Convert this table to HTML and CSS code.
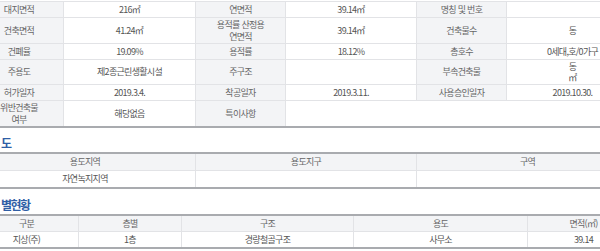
FILE: index.html
```html
<!DOCTYPE html>
<html lang="ko">
<head>
<meta charset="utf-8">
<link rel="stylesheet" href="styles.css">
</head>
<body>
<div class="page">
  <div class="grid info">
    <div class="th">대지면적</div><div class="td">216㎡</div>
    <div class="th">연면적</div><div class="td">39.14㎡</div>
    <div class="th">명칭 및 번호</div><div class="td"></div>

    <div class="th">건축면적</div><div class="td">41.24㎡</div>
    <div class="th">용적률 산정용<br>연면적</div><div class="td">39.14㎡</div>
    <div class="th">건축물수</div><div class="td">동</div>

    <div class="th">건폐율</div><div class="td">19.09%</div>
    <div class="th">용적률</div><div class="td">18.12%</div>
    <div class="th">총호수</div><div class="td">0세대,호/0가구</div>

    <div class="th">주용도</div><div class="td">제2종근린생활시설</div>
    <div class="th">주구조</div><div class="td"></div>
    <div class="th">부속건축물</div><div class="td">동<br>㎡</div>

    <div class="th">허가일자</div><div class="td">2019.3.4.</div>
    <div class="th">착공일자</div><div class="td">2019.3.11.</div>
    <div class="th">사용승인일자</div><div class="td">2019.10.30.</div>

    <div class="th">위반건축물<br>여부</div><div class="td">해당없음</div>
    <div class="th">특이사항</div><div class="td span3"></div>
  </div>

  <h2 class="title">도</h2>
  <div class="grid zone">
    <div class="th">용도지역</div><div class="th">용도지구</div><div class="th">구역</div>
    <div class="td">자연녹지지역</div><div class="td"></div><div class="td"></div>
  </div>

  <h2 class="title">별현황</h2>
  <div class="grid floor">
    <div class="th">구분</div><div class="th">층별</div><div class="th">구조</div><div class="th">용도</div><div class="th">면적(㎡)</div>
    <div class="td">지상(주)</div><div class="td">1층</div><div class="td">경량철골구조</div><div class="td">사무소</div><div class="td">39.14</div>
  </div>
</div>
</body>
</html>
```

FILE: styles.css
```css
html, body {
  margin: 0;
  padding: 0;
  background: #fff;
}

body {
  width: 600px;
  height: 251px;
  overflow: hidden;
  font-family: "Noto Sans CJK KR", "Noto Sans", sans-serif;
  font-size: 9px;
  letter-spacing: -0.7px;
  color: #555;
}

.page {
  margin-left: -25px;
  width: 664px;
}

.grid {
  display: grid;
  gap: 1px;
  background: #e2e3e6;
  border-bottom: 2px solid #a9abaf;
}

.th,
.td {
  display: flex;
  align-items: center;
  justify-content: center;
  text-align: center;
  line-height: 11.5px;
  background: #fff;
}

.th {
  background: #f3f4f6;
  color: #666;
}

.info {
  margin-top: 1px;
  border-top: 1px solid #e2e3e6;
  grid-template-columns: 88px 131px 89px 130px 89px 131px;
  grid-template-rows: 15px 25px 15px 24px 15px 25px;
}

.span3 {
  grid-column: span 3;
}

.title {
  margin: 7px 0 1px 26px;
  height: 16px;
  line-height: 16px;
  font-size: 12px;
  font-weight: 700;
  letter-spacing: -1.6px;
  color: #2f5ea6;
}

.zone,
.floor {
  border-top: 2px solid #a9abaf;
}

.zone {
  grid-template-columns: 220px 220px 221px;
  grid-template-rows: 16px 16px;
}

.floor {
  grid-template-columns: 103px 102px 171px 173px 111px;
  grid-template-rows: 15px 15px;
}

.zone + .title {
  margin-top: 8px;
}
```
